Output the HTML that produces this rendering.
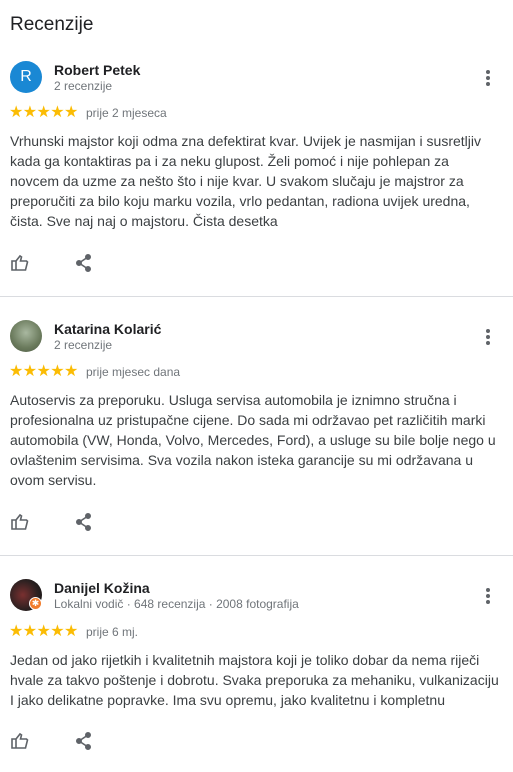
<!DOCTYPE html>
<html><head><meta charset="utf-8"><style>
body{margin:0;width:513px;height:772px;background:#fff;font-family:"Liberation Sans",Arial,sans-serif;position:relative;overflow:hidden;color:#202124}
.a{position:absolute}
h1{position:absolute;left:10px;top:14px;margin:0;font-size:19px;font-weight:400;color:#202124}
.av{position:absolute;left:10px;width:32px;height:32px;border-radius:50%}
.nm{position:absolute;left:54px;font-size:14px;font-weight:700;color:#202124}
.sub{position:absolute;left:54px;font-size:12px;color:#70757a}
.st{position:absolute;left:9px;font-size:16px;color:#fbbc04;letter-spacing:-0.6px;font-family:"DejaVu Sans",sans-serif}
.tm{position:absolute;left:86px;font-size:12px;color:#70757a}
.tx{position:absolute;left:10px;width:490px;font-size:14px;line-height:20px;color:#3c4043}
.hr{position:absolute;left:0;width:513px;height:1px;background:#dadce0}
.dots{position:absolute;left:486px;width:4px}
.dots i{display:block;width:4px;height:4px;border-radius:50%;background:#5f6368;margin-bottom:2px}
</style></head><body>
<h1>Recenzije</h1>

<div class="av" style="top:61px;background:#1a88d4;color:#fff;font-size:16px;text-align:center;line-height:32px">R</div>
<div class="nm" style="top:62px">Robert Petek</div>
<div class="sub" style="top:79px">2 recenzije</div>
<div class="dots" style="top:70px"><i></i><i></i><i></i></div>
<div class="st" style="top:102px">★★★★★</div>
<div class="tm" style="top:106px">prije 2 mjeseca</div>
<div class="tx" style="top:131px">Vrhunski majstor koji odma zna defektirat kvar. Uvijek je nasmijan i susretljiv kada ga kontaktiras pa i za neku glupost. Želi pomoć i nije pohlepan za novcem da uzme za nešto što i nije kvar. U svakom slučaju je majstror za preporučiti za bilo koju marku vozila, vrlo pedantan, radiona uvijek uredna, čista. Sve naj naj o majstoru. Čista desetka</div>
<svg class="a" style="left:10px;top:254px" width="20" height="18" viewBox="0 0 20 18" fill="none" stroke="#5f6368" stroke-width="1.6"><path d="M2 7h4v9H2zM6 7l4-5 1.5 1-1 4h6l1 1-2 8H6"/></svg>
<svg class="a" style="left:76px;top:254px" width="16" height="18" viewBox="0 0 16 18" fill="#5f6368" stroke="#5f6368" stroke-width="1.6"><circle cx="12" cy="3" r="2.2"/><circle cx="3" cy="9" r="2.2"/><circle cx="12" cy="15" r="2.2"/><path d="M12 3L3 9l9 6" fill="none"/></svg>
<div class="hr" style="top:296px"></div>

<div class="av" style="top:320px;background:radial-gradient(circle at 50% 40%,#a9b8a0,#6a7a5c 60%,#4d5a44)"></div>
<div class="nm" style="top:321px">Katarina Kolarić</div>
<div class="sub" style="top:338px">2 recenzije</div>
<div class="dots" style="top:329px"><i></i><i></i><i></i></div>
<div class="st" style="top:361px">★★★★★</div>
<div class="tm" style="top:365px">prije mjesec dana</div>
<div class="tx" style="top:390px">Autoservis za preporuku. Usluga servisa automobila je iznimno stručna i profesionalna uz pristupačne cijene. Do sada mi održavao pet različitih marki automobila (VW, Honda, Volvo, Mercedes, Ford), a usluge su bile bolje nego u ovlaštenim servisima. Sva vozila nakon isteka garancije su mi održavana u ovom servisu.</div>
<svg class="a" style="left:10px;top:513px" width="20" height="18" viewBox="0 0 20 18" fill="none" stroke="#5f6368" stroke-width="1.6"><path d="M2 7h4v9H2zM6 7l4-5 1.5 1-1 4h6l1 1-2 8H6"/></svg>
<svg class="a" style="left:76px;top:513px" width="16" height="18" viewBox="0 0 16 18" fill="#5f6368" stroke="#5f6368" stroke-width="1.6"><circle cx="12" cy="3" r="2.2"/><circle cx="3" cy="9" r="2.2"/><circle cx="12" cy="15" r="2.2"/><path d="M12 3L3 9l9 6" fill="none"/></svg>
<div class="hr" style="top:555px"></div>

<div class="av" style="top:579px;background:radial-gradient(circle at 40% 50%,#7a3030,#2a2020 60%,#111)"></div>
<div class="a" style="left:29px;top:597px;width:11px;height:11px;border-radius:50%;background:#f17c2c;border:1px solid #fff;color:#fff;font-size:9px;line-height:11px;text-align:center">✱</div>
<div class="nm" style="top:580px">Danijel Kožina</div>
<div class="sub" style="top:597px">Lokalni vodič · 648 recenzija · 2008 fotografija</div>
<div class="dots" style="top:588px"><i></i><i></i><i></i></div>
<div class="st" style="top:621px">★★★★★</div>
<div class="tm" style="top:625px">prije 6 mj.</div>
<div class="tx" style="top:650px">Jedan od jako rijetkih i kvalitetnih majstora koji je toliko dobar da nema riječi hvale za takvo poštenje i dobrotu. Svaka preporuka za mehaniku, vulkanizaciju I jako delikatne popravke. Ima svu opremu, jako kvalitetnu i kompletnu</div>
<svg class="a" style="left:10px;top:732px" width="20" height="18" viewBox="0 0 20 18" fill="none" stroke="#5f6368" stroke-width="1.6"><path d="M2 7h4v9H2zM6 7l4-5 1.5 1-1 4h6l1 1-2 8H6"/></svg>
<svg class="a" style="left:76px;top:732px" width="16" height="18" viewBox="0 0 16 18" fill="#5f6368" stroke="#5f6368" stroke-width="1.6"><circle cx="12" cy="3" r="2.2"/><circle cx="3" cy="9" r="2.2"/><circle cx="12" cy="15" r="2.2"/><path d="M12 3L3 9l9 6" fill="none"/></svg>
</body></html>
